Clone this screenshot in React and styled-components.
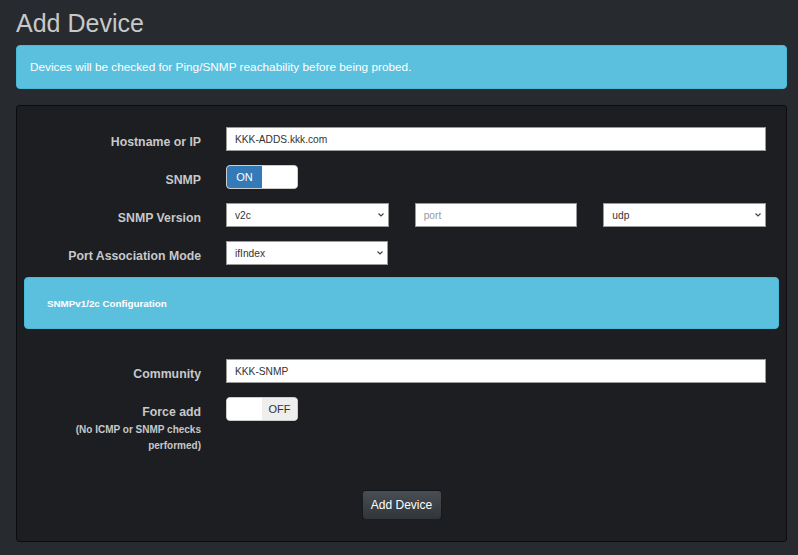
import React from "react";
import styled, { createGlobalStyle } from "styled-components";

const GlobalStyle = createGlobalStyle`
  html, body {
    margin: 0;
    padding: 0;
    background: #272b30;
  }
  body {
    font-family: "Liberation Sans", Arial, sans-serif;
    color: #c8c8c8;
  }
  * { box-sizing: border-box; }
`;

const Page = styled.div`
  width: 798px;
  height: 555px;
  padding: 0 11px 0 16px;
  overflow: hidden;
`;

const Title = styled.h1`
  margin: 0;
  padding-top: 9px;
  font-size: 25px;
  font-weight: 400;
  line-height: 28px;
  color: #c8c8c8;
  height: 45px;
`;

const Alert = styled.div`
  background: #5bc0de;
  border: 1px solid #4ab9d8;
  border-radius: 4px;
  padding: 14px 13px;
  font-size: 11.8px;
  line-height: 14px;
  color: #fff;
  margin-bottom: 16px;
`;

const Panel = styled.div`
  background: #1c1e22;
  border: 1px solid rgba(0, 0, 0, 0.6);
  border-radius: 4px;
  padding: 21px 7px 21px 7px;
  height: 437px;
  display: flex;
  flex-direction: column;
`;

const Row = styled.div`
  display: grid;
  grid-template-columns: 177px 1fr;
  column-gap: 25px;
  padding-right: 13px;
  margin-bottom: ${(p) => p.$gap ?? 14}px;
`;

const Label = styled.div`
  text-align: right;
  font-size: 12.3px;
  font-weight: 700;
  line-height: 14px;
  padding-top: 8px;
  color: #c8c8c8;
`;

const SubLabel = styled.div`
  font-size: 10px;
  line-height: 16px;
  margin-top: 3px;
`;

const fieldBase = `
  height: 24px;
  width: 100%;
  border: 1px solid #9a9a9a;
  border-radius: 0;
  background: #fff;
  font-family: "Liberation Sans", Arial, sans-serif;
  font-size: 10.2px;
  color: #333;
  outline: none;
`;

const TextInput = styled.input`
  ${fieldBase}
  padding: 0 8px;

  &::placeholder {
    color: #999;
  }
`;

const SelectWrap = styled.div`
  position: relative;
  width: ${(p) => p.$width || "100%"};
`;

const Select = styled.select`
  ${fieldBase}
  appearance: none;
  -webkit-appearance: none;
  padding: 0 20px 0 8px;
`;

const Chevron = styled.svg`
  position: absolute;
  right: 5px;
  top: 10px;
  width: 6px;
  height: 4px;
  pointer-events: none;
`;

const Triple = styled.div`
  display: grid;
  grid-template-columns: 1fr 1fr 1fr;
  column-gap: 26px;
`;

const Switch = styled.div`
  display: flex;
  width: 72px;
  height: 24px;
  border: 1px solid #ccc;
  border-radius: 4px;
  overflow: hidden;
  background: #fff;
`;

const SwitchHalf = styled.span`
  flex: 1;
  display: flex;
  align-items: center;
  justify-content: center;
  font-size: 11px;
  color: ${(p) => (p.$on ? "#fff" : p.$off ? "#333" : "transparent")};
  background: ${(p) => (p.$on ? "#337ab7" : p.$off ? "#eee" : "#fff")};
`;

const ConfigBox = styled.div`
  background: #5bc0de;
  border: 1px solid #4ab9d8;
  border-radius: 4px;
  height: 52px;
  padding: 0 22px;
  display: flex;
  align-items: center;
  font-size: 9.8px;
  font-weight: 700;
  color: #fff;
  margin-bottom: 30px;
`;

const Footer = styled.div`
  display: flex;
  justify-content: center;
  margin-top: auto;
`;

const Button = styled.button`
  height: 30px;
  width: 80px;
  padding: 0;
  border: 1px solid rgba(0, 0, 0, 0.6);
  border-radius: 4px;
  background: linear-gradient(#484e55, #3a3f44 60%, #313539);
  color: #fff;
  font-family: "Liberation Sans", Arial, sans-serif;
  font-size: 12px;
`;

function Dropdown({ width, value, options }) {
  return (
    <SelectWrap $width={width}>
      <Select defaultValue={value}>
        {options.map((o) => (
          <option key={o}>{o}</option>
        ))}
      </Select>
      <Chevron viewBox="0 0 6 4">
        <path d="M0.5 0.5 L3 3 L5.5 0.5" fill="none" stroke="#444" strokeWidth="1.2" />
      </Chevron>
    </SelectWrap>
  );
}

function Toggle({ on }) {
  return (
    <Switch>
      {on ? (
        <>
          <SwitchHalf $on>ON</SwitchHalf>
          <SwitchHalf />
        </>
      ) : (
        <>
          <SwitchHalf />
          <SwitchHalf $off>OFF</SwitchHalf>
        </>
      )}
    </Switch>
  );
}

export default function App() {
  return (
    <Page>
      <GlobalStyle />
      <Title>Add Device</Title>
      <Alert>Devices will be checked for Ping/SNMP reachability before being probed.</Alert>
      <Panel>
        <Row>
          <Label>Hostname or IP</Label>
          <TextInput defaultValue="KKK-ADDS.kkk.com" />
        </Row>
        <Row>
          <Label>SNMP</Label>
          <Toggle on />
        </Row>
        <Row>
          <Label>SNMP Version</Label>
          <Triple>
            <Dropdown value="v2c" options={["v1", "v2c", "v3"]} />
            <TextInput placeholder="port" />
            <Dropdown value="udp" options={["udp", "tcp"]} />
          </Triple>
        </Row>
        <Row $gap={12}>
          <Label>Port Association Mode</Label>
          <Dropdown width="162px" value="ifIndex" options={["ifIndex", "ifName", "ifDescr", "ifAlias"]} />
        </Row>
        <ConfigBox>SNMPv1/2c Configuration</ConfigBox>
        <Row>
          <Label>Community</Label>
          <TextInput defaultValue="KKK-SNMP" />
        </Row>
        <Row $gap={0}>
          <Label>
            Force add
            <SubLabel>
              (No ICMP or SNMP checks
              <br />
              performed)
            </SubLabel>
          </Label>
          <div>
            <Toggle />
          </div>
        </Row>
        <Footer>
          <Button>Add Device</Button>
        </Footer>
      </Panel>
    </Page>
  );
}
